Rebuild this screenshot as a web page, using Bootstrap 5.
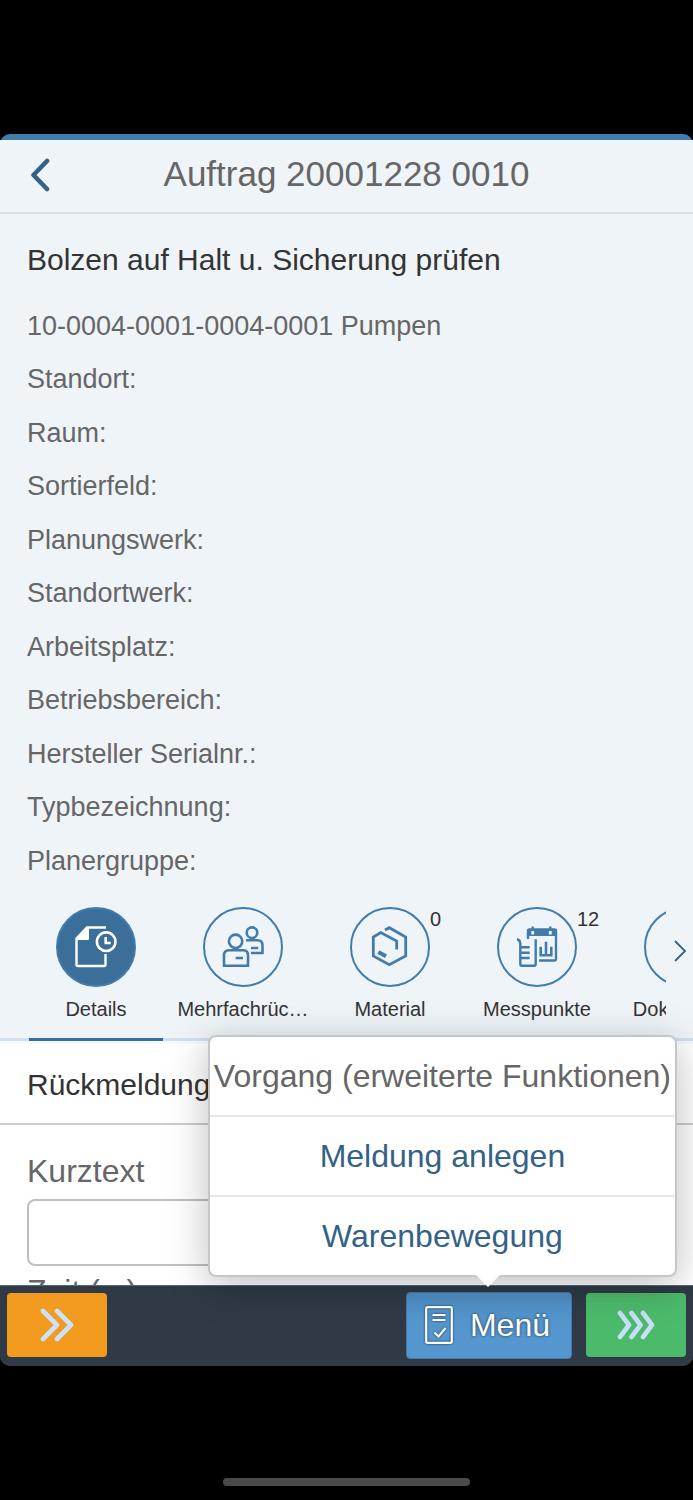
<!DOCTYPE html>
<html lang="de">
<head>
<meta charset="utf-8">
<meta name="viewport" content="width=device-width, initial-scale=1">
<title>Auftrag 20001228 0010</title>
<link href="https://cdn.jsdelivr.net/npm/bootstrap@5.3.0/dist/css/bootstrap.min.css" rel="stylesheet">
<style>
  body { font-family: "Liberation Sans", Arial, sans-serif; background: #000; color: #333; }
  .screen { height: 100vh; padding-top: 134px; }
  .app-shell { border-top: 6px solid #427cac; border-radius: 10px; background: #2f3a46; min-height: 0; }
  .app-header { background: #eff4f9; border-bottom: 2px solid #d5e2ee; height: 74px; }
  .app-header h1 { font-size: 35px; line-height: 40px; color: #666; font-weight: 400; padding-top: 14px; }
  .back-btn { position: absolute; left: 12px; top: 7px; width: 56px; height: 56px; }
  .scroll-area { min-height: 0; background: #fff; }
  .facts { background: #eff4f9; padding: 26px 27px 0; }
  .facts h2, .panel-title { font-size: 30px; line-height: 40px; font-weight: 400; color: #333; }
  .facts h2 { margin-bottom: 19px; }
  .facts li { font-size: 27px; line-height: 54px; color: #666; }
  .facts li:nth-child(even) { line-height: 53px; }
  .tab-strip { background: #eff4f9; border-bottom: 3px solid #d1e0ee; box-shadow: 0 3px 0 #f7fafc; height: 153px; padding: 19px 27px 0 29px; }
  .tab-scroll { gap: 13px; height: 134px; }
  .tab-item { flex: 0 0 134px; font-size: 20px; line-height: 24px; color: #333; text-decoration: none; text-align: center; border-bottom: 3px solid transparent; }
  .tab-item.active { border-color: #3b6e99; }
  .tab-icon { width: 80px; height: 80px; border: 2px solid #427cac; border-radius: 50%; color: #427cac; margin: 0 auto 10px; }
  .tab-icon svg { margin: -2px; display: block; flex: none; }
  .active .tab-icon { background: #3b6e99; color: #fff; }
  .tab-count { position: absolute; left: 107px; top: 0; }
  .tab-next { position: absolute; right: 0; top: 43px; width: 26px; height: 40px; color: #346187; }
  .panel-title { padding: 24px 27px 18px; border-bottom: 2px solid #ccc; }
  .form-area { padding: 26px 27px 0; }
  .form-area label { font-size: 32px; line-height: 40px; color: #666; }
  .form-area .form-control { height: 67px; border: 2px solid #bfbfbf; border-radius: 8px; font-size: 32px; margin: 8px 0 5px; }
  .app-footer { background: #2f3a46; border-top: 1px solid #55697d; border-radius: 0 0 10px 10px; height: 81px; padding: 0 7px 2px; }
  .app-footer .btn { border-radius: 4px; }
  .side-btn { width: 100px; height: 64px; }
  .btn-skip { background: #f39b1f; }
  .btn-done { background: #4cba6b; margin-left: 14px; }
  .btn-menu { background: linear-gradient(#4f8ec4, #5496cd 40%); border: 1px solid #427cac; color: #fff; font-size: 32px; line-height: 40px; height: 67px; padding: 0 21px 0 18px; gap: 17px; text-shadow: 0 0 3px #234; }
  .btn-menu:hover { color: #fff; }
  .btn-menu svg { filter: drop-shadow(0 0 1px #234); }
  .action-pop { position: absolute; right: 16px; bottom: 89px; background: #fff; border: 2px solid #c3c7cb; border-radius: 8px; box-shadow: 0 8px 40px rgba(0,0,0,.26); z-index: 5; font-size: 32px; line-height: 78px; text-align: center; color: #666; white-space: nowrap; }
  .action-pop a { display: block; border-top: 2px solid #e8e8e8; color: #346187; text-decoration: none; }
  .action-pop > div { padding: 0 4px; }
  .action-pop::after { content: ""; position: absolute; right: 175px; top: 100%; border: 12px solid transparent; border-top-color: #fff; border-bottom: 0; }
  .home-zone { height: 134px; flex: none; padding-bottom: 14px; }
  .home-bar { width: 247px; height: 8px; border-radius: 4px; background: #4a4a4a; }
</style>
</head>
<body>
<div class="screen d-flex flex-column">
  <main class="app-shell d-flex flex-column flex-grow-1">
    <header class="app-header position-relative flex-shrink-0">
      <button class="back-btn btn p-0 border-0 d-flex align-items-center justify-content-center" type="button" aria-label="Zurück">
        <svg width="20" height="34" viewBox="0 0 20 34" fill="none" stroke="#346187" stroke-width="4.600" stroke-linecap="round" stroke-linejoin="round"><path d="M17 3 3.500 17 17 31"/></svg>
      </button>
      <h1 class="text-center m-0">Auftrag 20001228 0010</h1>
    </header>

    <div class="scroll-area flex-grow-1 overflow-hidden">
      <section class="facts">
        <h2>Bolzen auf Halt u. Sicherung prüfen</h2>
        <ul class="list-unstyled m-0">
          <li>10-0004-0001-0004-0001 Pumpen</li>
          <li>Standort:</li>
          <li>Raum:</li>
          <li>Sortierfeld:</li>
          <li>Planungswerk:</li>
          <li>Standortwerk:</li>
          <li>Arbeitsplatz:</li>
          <li>Betriebsbereich:</li>
          <li>Hersteller Serialnr.:</li>
          <li>Typbezeichnung:</li>
          <li>Planergruppe:</li>
        </ul>
      </section>

      <nav class="tab-strip position-relative">
        <div class="tab-scroll d-flex overflow-hidden">
          <a class="tab-item active" href="#details">
            <div class="tab-icon d-flex"><svg width="80" height="80" viewBox="0 0 80 80" fill="none" stroke="currentColor" stroke-width="2.400"><path d="M50 20.500H31L20.500 31.500V57.500q0 1.500 1.500 1.500H48q1.500 0 1.500-1.500V47"/><path d="M20.500 33 30 20.500h3V32q0 1-1 1Z" fill="currentColor" stroke="none"/><circle cx="50.200" cy="34.700" r="9.300" stroke-width="2.600"/><path d="M49.700 30v6h5" stroke-width="2.600"/></svg></div>
            Details
          </a>
          <a class="tab-item" href="#mehrfach">
            <div class="tab-icon d-flex"><svg width="80" height="80" viewBox="0 0 80 80" fill="none" stroke="currentColor" stroke-width="2.600"><circle cx="32.600" cy="34.300" r="6.700"/><path d="M21 58.700V48.500q0-5.200 5-5.200H40.500q4.500 0 4.500 5.200V58.700ZM32.600 51H40"/><circle cx="49" cy="25.700" r="5.300"/><path d="M43 33.300H54.500q5 0 5 5V46H48M48 41h7.300"/></svg></div>
            Mehrfachrüc…
          </a>
          <a class="tab-item position-relative" href="#material">
            <span class="tab-count">0</span>
            <div class="tab-icon d-flex"><svg width="80" height="80" viewBox="0 0 80 80" fill="none" stroke="currentColor" stroke-width="2.800"><path d="M35 23 39.300 20.700 55.700 30V49L39.300 57.700 23.300 49V30L30.700 25.500 46.700 34V42.500"/><path d="M28.300 45 36 49.300" stroke-width="4"/></svg></div>
            Material
          </a>
          <a class="tab-item position-relative" href="#messpunkte">
            <span class="tab-count">12</span>
            <div class="tab-icon d-flex"><svg width="80" height="80" viewBox="0 0 80 80" fill="none" stroke="currentColor" stroke-width="2.400"><path d="M31 32V24q0-1.500 1.500-1.500H57.500q1.500 0 1.500 1.500V52q0 1.500-1.500 1.500H42"/><path d="M30 22.500H60V29H30Z" fill="currentColor" stroke="none"/><path d="M35.700 19.500v4M53.300 19.500v4"/><path d="M35.700 24v3.500M53.300 24v3.500" stroke="#eff4f9" stroke-width="2.800"/><path d="M20 32.500q3 0 3.300 4V57q0 1.700 1.700 1.700H37.200q1.500 0 1.500-1.700V32.300M23.300 40.300h9.400M23.300 45.700h9.400M23.300 51h9.400"/><path d="M43.700 39.700v8.600H54.300v-8.600M49 34.700v13.600" stroke-width="2.600"/></svg></div>
            Messpunkte
          </a>
          <a class="tab-item" href="#dokumente">
            <div class="tab-icon d-flex"></div>
            Dokumente
          </a>
        </div>
        <button class="tab-next btn p-0 border-0 d-flex align-items-center justify-content-center" type="button" aria-label="Weitere Register">
          <svg width="12" height="22" viewBox="0 0 12 22" fill="none" stroke="currentColor" stroke-width="1.800"><path d="M1 1 11 11 1 21"/></svg>
        </button>
      </nav>

      <section>
        <h2 class="panel-title m-0">Rückmeldung</h2>
        <form class="form-area">
          <label class="d-block" for="kurztext">Kurztext</label>
          <input class="form-control" id="kurztext" type="text">
          <label class="d-block" for="zeit">Zeit (m)</label>
          <input class="form-control" id="zeit" type="text">
        </form>
      </section>
    </div>

    <footer class="app-footer position-relative d-flex align-items-center flex-shrink-0">
      <button class="btn side-btn btn-skip border-0 p-0 me-auto" type="button" aria-label="Überspringen">
        <svg width="34" height="34" viewBox="0 0 34 34" fill="none" stroke="#cbe3fa" stroke-width="4.600" stroke-linecap="round" stroke-linejoin="round"><path d="M3 3 17 17 3 31M17 3 31 17 17 31"/></svg>
      </button>
      <button class="btn btn-menu d-flex align-items-center" type="button" aria-expanded="true">
        <svg width="28" height="38" viewBox="0 0 28 38" fill="none" stroke="#fff" stroke-width="2"><rect x="1.200" y="1.200" width="25.600" height="35.600" rx="1.500" stroke-width="2.200"/><path d="M7.500 9h13M7.500 14h13M9.500 26.500l4 4 7-8.500"/></svg>
        Menü
      </button>
      <button class="btn side-btn btn-done border-0 p-0" type="button" aria-label="Abschließen">
        <svg width="38" height="30" viewBox="0 0 38 30" fill="none" stroke="#c7dff7" stroke-width="4.600" stroke-linecap="round" stroke-linejoin="round"><path d="M3 3 12 15 3 27M14.500 3 23.500 15 14.500 27M26 3 35 15 26 27"/></svg>
      </button>
      <div class="action-pop">
        <div>Vorgang (erweiterte Funktionen)</div>
        <a href="#meldung">Meldung anlegen</a>
        <a href="#waren">Warenbewegung</a>
      </div>
    </footer>
  </main>
  <div class="home-zone d-flex align-items-end justify-content-center"><div class="home-bar"></div></div>
</div>
<script src="https://cdn.jsdelivr.net/npm/bootstrap@5.3.0/dist/js/bootstrap.bundle.min.js"></script>
</body>
</html>
